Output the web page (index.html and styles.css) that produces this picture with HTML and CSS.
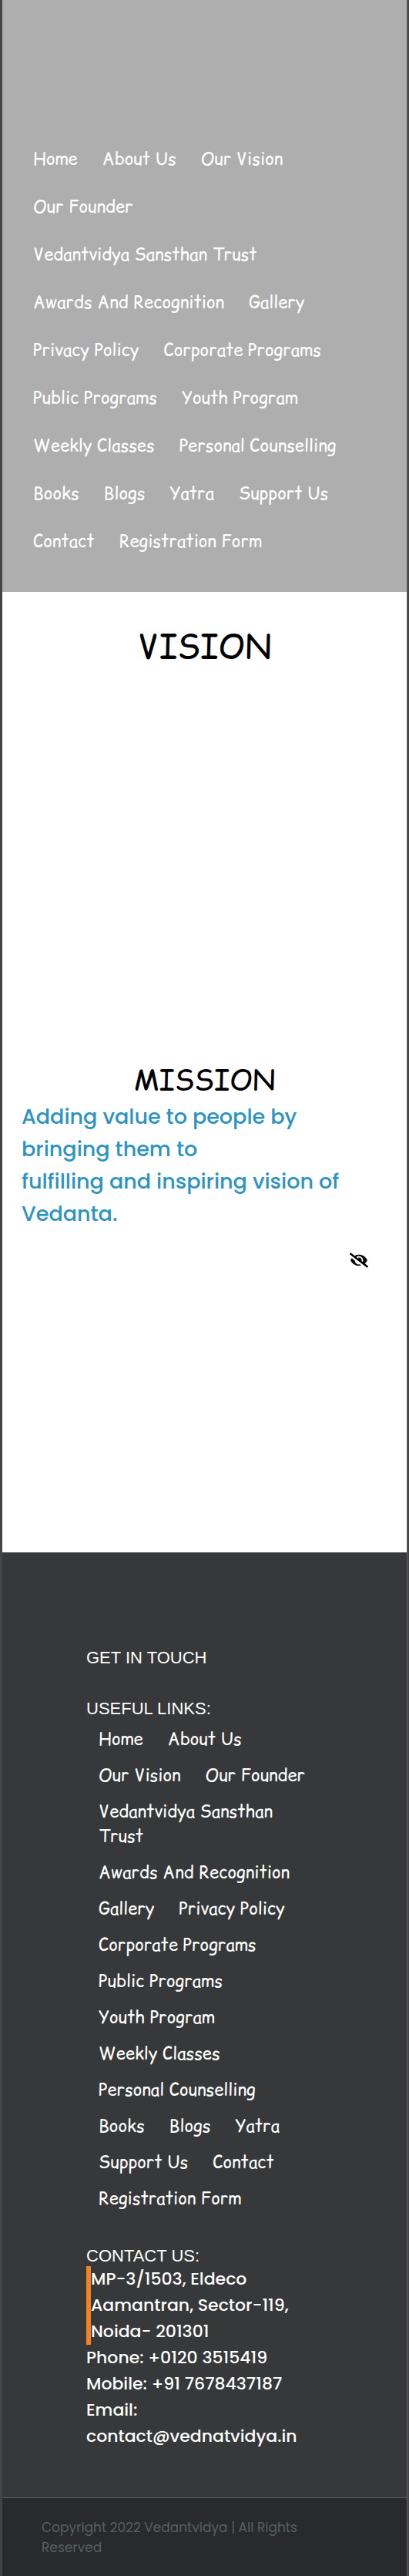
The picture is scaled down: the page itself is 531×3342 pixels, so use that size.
FILE: index.html
```html
<!DOCTYPE html>
<html lang="en">
<head>
<meta charset="utf-8">
<meta name="viewport" content="width=device-width, initial-scale=1">
<title>Vedantvidya - Our Vision</title>
<link rel="stylesheet" href="styles.css">
</head>
<body>
<div class="page">
  <header class="site-header">
    <nav>
      <ul class="menu menu-top">
        <li><a href="#">Home</a></li>
        <li><a href="#">About Us</a></li>
        <li><a href="#">Our Vision</a></li>
        <li><a href="#">Our Founder</a></li>
        <li><a href="#">Vedantvidya Sansthan Trust</a></li>
        <li><a href="#">Awards And Recognition</a></li>
        <li><a href="#">Gallery</a></li>
        <li><a href="#">Privacy Policy</a></li>
        <li><a href="#">Corporate Programs</a></li>
        <li><a href="#">Public Programs</a></li>
        <li><a href="#">Youth Program</a></li>
        <li><a href="#">Weekly Classes</a></li>
        <li><a href="#">Personal Counselling</a></li>
        <li><a href="#">Books</a></li>
        <li><a href="#">Blogs</a></li>
        <li><a href="#">Yatra</a></li>
        <li><a href="#">Support Us</a></li>
        <li><a href="#">Contact</a></li>
        <li><a href="#">Registration Form</a></li>
      </ul>
    </nav>
  </header>

  <main>
    <section class="vision">
      <h1>VISION</h1>
    </section>
    <section class="mission">
      <h2>MISSION</h2>
      <p>Adding value to people by bringing them to<br>fulfilling and inspiring vision of Vedanta.</p>
      <div class="tools">
        <button type="button" class="hide-button">
          <svg viewBox="0 0 640 512" aria-hidden="true"><path d="M320 400c-75.85 0-137.25-58.71-142.9-133.11L72.2 185.82c-13.79 17.3-26.48 35.59-36.72 55.59a32.35 32.35 0 0 0 0 29.19C89.71 376.41 197.07 448 320 448c26.91 0 52.87-4 77.89-10.46L346 397.39a144.13 144.13 0 0 1-26 2.61zm313.82 58.1l-110.55-85.44a331.25 331.25 0 0 0 81.25-102.07 32.35 32.35 0 0 0 0-29.19C550.29 135.59 442.93 64 320 64a308.15 308.15 0 0 0-147.32 37.7L45.46 3.37A16 16 0 0 0 23 6.18L3.37 31.45A16 16 0 0 0 6.18 53.9l588.36 454.73a16 16 0 0 0 22.46-2.81l19.64-25.27a16 16 0 0 0-2.82-22.45zm-183.72-142l-39.3-30.38A94.75 94.75 0 0 0 416 256a94.76 94.76 0 0 0-121.31-92.21A47.65 47.65 0 0 1 304 192a46.64 46.64 0 0 1-1.54 10l-73.61-56.89A142.31 142.31 0 0 1 320 112a143.92 143.92 0 0 1 144 144c0 21.63-5.29 41.79-13.9 60.11z"/></svg>
        </button>
      </div>
    </section>
  </main>

  <footer class="site-footer">
    <div class="footer-columns">
      <h3>GET IN TOUCH</h3>
      <div class="links">
        <h3>USEFUL LINKS:</h3>
        <ul class="menu menu-bottom">
          <li><a href="#">Home</a></li>
          <li><a href="#">About Us</a></li>
          <li><a href="#">Our Vision</a></li>
          <li><a href="#">Our Founder</a></li>
          <li><a href="#">Vedantvidya Sansthan Trust</a></li>
          <li><a href="#">Awards And Recognition</a></li>
          <li><a href="#">Gallery</a></li>
          <li><a href="#">Privacy Policy</a></li>
          <li><a href="#">Corporate Programs</a></li>
          <li><a href="#">Public Programs</a></li>
          <li><a href="#">Youth Program</a></li>
          <li><a href="#">Weekly Classes</a></li>
          <li><a href="#">Personal Counselling</a></li>
          <li><a href="#">Books</a></li>
          <li><a href="#">Blogs</a></li>
          <li><a href="#">Yatra</a></li>
          <li><a href="#">Support Us</a></li>
          <li><a href="#">Contact</a></li>
          <li><a href="#">Registration Form</a></li>
        </ul>
      </div>
      <h3>CONTACT US:</h3>
      <address>
        <p class="street">MP-3/1503, Eldeco Aamantran, Sector-119, Noida- 201301</p>
        <p>Phone: +0120 3515419</p>
        <p>Mobile: +91 7678437187</p>
        <p>Email: contact@vednatvidya.in</p>
      </address>
    </div>
    <div class="copyright">
      <p>Copyright 2022 Vedantvidya | All Rights Reserved</p>
    </div>
  </footer>
</div>
</body>
</html>
```
FILE: styles.css
```css
* {
  box-sizing: border-box;
}

body,
h1,
h2,
h3,
p,
ul {
  margin: 0;
  padding: 0;
}

body {
  background: #444444;
  font-family: Poppins, "Noto Sans", sans-serif;
}

.page {
  margin: 0 2px 0 3px;
  border-right: 1px solid #666666;
  background: #ffffff;
}

/* Link menus */
.menu {
  display: flex;
  flex-wrap: wrap;
  list-style: none;
  font: 400 22px/32px "Comic Relief", "Comic Sans MS", "Noto Sans", sans-serif;
}

.menu li {
  padding: 0 16px;
}

.menu a {
  color: #ffffff;
  text-decoration: none;
}

.menu-top {
  row-gap: 30px;
}

.menu-bottom {
  row-gap: 15px;
}

/* Header */
.site-header {
  padding: 190px 24px 50px;
  background: #aeaeae;
}

/* Vision and mission */
h1,
h2 {
  color: #000000;
  font-family: "Comic Relief", "Comic Sans MS", "Noto Sans", sans-serif;
  font-weight: 400;
  text-align: center;
}

h1 {
  font-size: 43px;
  line-height: 62px;
}

h2 {
  font-size: 37px;
  line-height: 54px;
}

.vision {
  min-height: 606px;
  padding-top: 40px;
}

.mission {
  min-height: 640px;
  padding: 0 25px;
}

.mission p {
  color: #2d93c1;
  font-size: 27px;
  font-weight: 500;
  line-height: 42px;
}

.tools {
  display: flex;
  justify-content: flex-end;
  padding: 29px 25px 0 0;
}

.hide-button {
  padding: 0;
  border: 0;
  background: none;
}

.hide-button svg {
  display: block;
  width: 24px;
  height: 20px;
}

/* Footer */
.site-footer {
  background: #373839;
  color: #ffffff;
}

.footer-columns {
  padding: 124px 109px 62px;
}

h3 {
  font: 400 22px/26px "Liberation Sans", Arial, sans-serif;
}

.links {
  display: grid;
  gap: 10px;
  padding: 40px 0 46px;
}

address {
  font-size: 22px;
  font-style: normal;
  font-weight: 500;
  line-height: 34px;
}

address p {
  padding-right: 15px;
}

.street {
  border-left: 6px solid #f58220;
}

.copyright {
  padding: 25px 80px 24px 51px;
  border-top: 1px solid #5f6060;
  border-bottom: 1px solid #aaaaaa;
  background: #292a2b;
  color: #566060;
  font-size: 17px;
  line-height: 26px;
}
```
